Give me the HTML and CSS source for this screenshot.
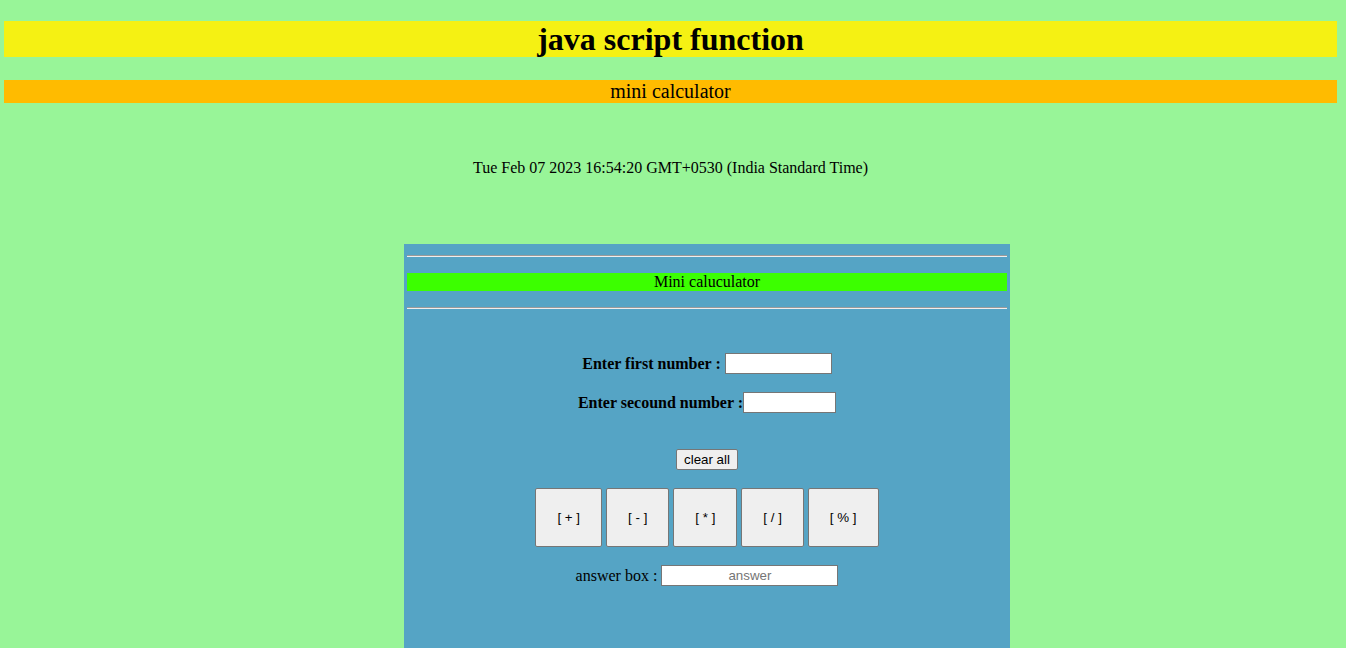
FILE: index.html
```html
<!DOCTYPE html>
<html>
<head>
<meta charset="utf-8">
<link rel="stylesheet" href="styles.css">
</head>
<body>
<h1 class="title">java script function</h1>
<div class="subtitle">mini calculator</div>
<p class="date">Tue Feb 07 2023 16:54:20 GMT+0530 (India Standard Time)</p>
<div class="calc">
  <hr class="rule">
  <div class="calc-head">Mini caluculator</div>
  <hr class="rule">
  <div class="row row-first"><b class="lbl">Enter first number :</b> <input class="num num1" type="text"></div>
  <div class="row row-second"><b class="lbl">Enter secound number :</b><input class="num num2" type="text"></div>
  <div class="row row-clear"><button class="clear">clear all</button></div>
  <div class="ops">
    <button class="op">[ + ]</button>
    <button class="op">[ - ]</button>
    <button class="op">[ * ]</button>
    <button class="op">[ / ]</button>
    <button class="op">[ % ]</button>
  </div>
  <div class="row row-answer"><span class="lbl2">answer box :</span> <input class="answer" type="text" placeholder="answer"></div>
</div>
</body>
</html>
```
FILE: styles.css
```css
html, body { margin: 0; padding: 0; }
body {
  background: #98f598;
  font-family: "Liberation Serif", "Times New Roman", serif;
  color: #000;
  padding: 21px 9px 0 4px;
  height: 648px;
  box-sizing: border-box;
  overflow: hidden;
}
.title {
  margin: 0;
  background: #f5f113;
  height: 36px;
  line-height: 36px;
  font-size: 32px;
  font-weight: bold;
  text-align: center;
}
.subtitle {
  margin-top: 23px;
  background: #ffbb00;
  height: 23px;
  line-height: 23px;
  font-size: 20px;
  text-align: center;
}
.date {
  margin: 56px 0 0;
  height: 18px;
  line-height: 18px;
  font-size: 16px;
  text-align: center;
}
.calc {
  margin: 67px 0 0 400px;
  width: 606px;
  height: 420px;
  background: #55a4c5;
  padding: 11px 3px 0;
  box-sizing: border-box;
  display: flex;
  flex-direction: column;
  align-items: center;
}
.rule {
  width: 100%;
  margin: 0;
  border: none;
  border-top: 1px solid #9a9a9a;
  border-bottom: 1px solid #eeeeee;
  height: 0;
}
.calc-head {
  margin: 16px 0 16px;
  width: 100%;
  height: 18px;
  line-height: 18px;
  background: #3cff00;
  text-align: center;
  font-size: 16px;
}
.row {
  display: flex;
  align-items: center;
  justify-content: center;
  font-size: 16px;
}
.row-first { margin-top: 44px; height: 21px; }
.row-second { margin-top: 18px; height: 21px; }
.row-clear { margin-top: 36px; height: 21px; }
.row-answer { margin-top: 18px; height: 21px; white-space: pre; }
.lbl { font-weight: bold; white-space: pre; }
.num, .answer {
  height: 21px;
  box-sizing: border-box;
  border: 1px solid #767676;
  background: #fff;
  padding: 1px 2px;
  margin: 0;
  font-family: "Liberation Sans", Arial, sans-serif;
  font-size: 13.33px;
}
.num1 { width: 107px; margin-left: 4px; }
.num2 { width: 93px; }
.answer { width: 177px; margin-left: 4px; text-align: center; }
.answer::placeholder { color: #757575; }
.clear, .op {
  font-family: "Liberation Sans", Arial, sans-serif;
  font-size: 13.33px;
  background: #efefef;
  border: 1px solid #767676;
  border-radius: 2px;
  color: #000;
  margin: 0;
}
.clear { height: 21px; padding: 0 7px; }
.ops {
  margin-top: 18px;
  display: flex;
  gap: 4px;
}
.op {
  height: 59px;
  padding: 0 21px;
}
```
